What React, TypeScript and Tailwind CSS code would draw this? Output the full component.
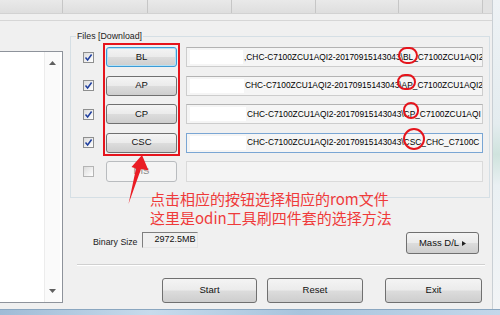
import React from 'react';

const ui = "font-['Liberation_Sans',Arial,sans-serif]";

const CheckBox = ({ checked }: { checked: boolean }) => (
  <div
    className={`w-[11px] h-[11px] border ${checked ? 'border-[#8e8f8f]' : 'border-[#b4b4b4]'} bg-[linear-gradient(135deg,#dcdcdc,#ffffff)] flex items-center justify-center`}
  >
    {checked && (
      <svg width="9" height="9" viewBox="0 0 9 9">
        <path d="M1.5 4.5 L3.6 7 L7.6 1.5" fill="none" stroke="#1f3f9e" strokeWidth="1.5" />
      </svg>
    )}
  </div>
);

const WinButton = ({
  label,
  focused,
  disabled,
  className,
}: {
  label: React.ReactNode;
  focused?: boolean;
  disabled?: boolean;
  className: string;
}) => {
  let look =
    'border-[#707070] bg-[linear-gradient(180deg,#f4f4f4_0%,#ebebeb_48%,#dcdcdc_52%,#cecece_100%)] text-[#111]';
  if (focused)
    look =
      'border-[#3c9bd6] shadow-[inset_0_0_0_1px_#b3e1f6] bg-[linear-gradient(180deg,#f4f4f4_0%,#ebebeb_48%,#dcdcdc_52%,#cecece_100%)] text-[#111]';
  if (disabled) look = 'border-[#b9bcbf] bg-[#f4f4f4] text-[#8a8a8a]';
  return (
    <div className={`flex items-center justify-center rounded-[3px] border text-[9.5px] ${look} ${className}`}>
      {label}
    </div>
  );
};

const rows = [
  { name: 'BL', text: ',CHC-C7100ZCU1AQI2-20170915143043\\BL_C7100ZCU1AQI2', patch: 53, focused: true },
  { name: 'AP', text: 'CHC-C7100ZCU1AQI2-20170915143043\\AP_C7100ZCU1AQI2', patch: 54 },
  { name: 'CP', text: 'CHC-C7100ZCU1AQI2-20170915143043\\CP_C7100ZCU1AQI', patch: 56 },
  { name: 'CSC', text: 'CHC-C7100ZCU1AQI2-20170915143043\\CSC_CHC_C7100C', patch: 56, blue: true },
];

const FileRow = ({ r }: { r: (typeof rows)[number] }) => (
  <div className="flex items-center h-[20px]">
    <CheckBox checked />
    <WinButton label={r.name} focused={r.focused} className="ml-[12px] w-[71px] h-[20px]" />
    <div
      className={`ml-[9px] w-[297px] h-[20px] border ${r.blue ? 'border-[#7aa6d4]' : 'border-[#cdcdcd] border-t-[#b3b3b3]'} bg-[#f5f5f5] flex items-center overflow-hidden whitespace-nowrap`}
    >
      <span className="ml-[3px] h-[14px] bg-white shrink-0" style={{ width: r.patch }} />
      <span className="ml-[1px] text-[9.5px] text-black origin-left scale-x-[0.88]">{r.text}</span>
    </div>
  </div>
);

export default function App() {
  return (
    <div className={`relative w-[500px] h-[315px] overflow-hidden bg-[#f0f0f0] flex flex-col ${ui}`}>
      <div className="flex flex-1 min-h-0">
        {/* window */}
        <div className="w-[492px] flex flex-col">
          {/* tab strip */}
          <div className="h-[14px] flex bg-[#e2e2e2] border-b border-[#d2d2d2]">
            {[63, 85, 84, 84, 83, 84].map((w, i) => (
              <div key={i} style={{ width: w }} className="h-full border-r border-[#c6c6c6] bg-[linear-gradient(180deg,#e9e9e9,#dedede)]" />
            ))}
          </div>
          <div className="h-[6px]" />
          <div className="h-[1px] bg-[#d6d6d6]" />

          <div className="flex flex-1 min-h-0">
            {/* left log list */}
            <div className="w-[63px] pt-[30px]">
              <div className="h-[252px] bg-white border border-l-0 border-[#8e939b] flex justify-end">
                <div className="w-[16px] mr-[2px] border-l border-[#ececec] bg-[#fafafa] flex flex-col items-center justify-between py-[9px]">
                  <svg width="7" height="4" viewBox="0 0 7 4">
                    <path d="M0 4 L3.5 0 L7 4 Z" fill="#5f5f5f" />
                  </svg>
                  <svg width="7" height="4" viewBox="0 0 7 4">
                    <path d="M0 0 L3.5 4 L7 0 Z" fill="#5f5f5f" />
                  </svg>
                </div>
              </div>
            </div>

            {/* right column */}
            <div className="ml-[7px] flex-1 flex flex-col">
              <div className="relative mt-[15px] w-[420px] h-[162px] border border-[#d5dfe5] pt-[10px] pl-[12px]">
                <span className="absolute -top-[6px] left-[5px] px-[1px] bg-[#f0f0f0] text-[8.8px] leading-[10px] text-[#222]">
                  Files [Download]
                </span>
                <div className="flex flex-col gap-[8.5px]">
                  {rows.map((r) => (
                    <FileRow key={r.name} r={r} />
                  ))}
                  <div className="flex items-center h-[20px]">
                    <CheckBox checked={false} />
                    <WinButton label="DIS" disabled className="ml-[12px] w-[71px] h-[21px]" />
                    <div className="ml-[9px] w-[297px] h-[21px] border border-[#dadada] bg-[#f4f4f4]" />
                  </div>
                </div>
              </div>

              <div className="mt-[34px] h-[22px] flex items-start">
                <span className="ml-[23px] mt-[5px] text-[8.8px] leading-[10px] text-[#222]">Binary Size</span>
                <div className="ml-[4px] w-[56px] h-[16px] border border-[#7f7f7f] border-r-[#e6e6e6] border-b-[#e6e6e6] bg-[#f0f0f0] flex items-center justify-end pr-[1px] text-[9px] text-[#111]">
                  2972.5MB
                </div>
                <WinButton
                  label={
                    <span className="flex items-center gap-[3px]">
                      Mass D/L
                      <svg width="4" height="5" viewBox="0 0 4 5">
                        <path d="M0 0 L4 2.5 L0 5 Z" fill="#222" />
                      </svg>
                    </span>
                  }
                  className="ml-auto mr-[13px] w-[73px] h-[22px] text-[8.8px]"
                />
              </div>

              <div className="mt-[10px] ml-[7px] mr-[7px] h-[2px] border-t border-[#d0d0d0] border-b border-b-white" />

              <div className="mt-[12px] flex">
                <WinButton label="Start" className="ml-[92px] w-[95px] h-[25px]" />
                <WinButton label="Reset" className="ml-[10px] w-[96px] h-[25px]" />
                <WinButton label="Exit" className="ml-[22px] w-[97px] h-[25px]" />
              </div>
            </div>
          </div>
        </div>
        {/* right window frame / desktop */}
        <div className="flex-1 border-l border-[#c9cfd4] bg-[linear-gradient(180deg,#eef2f5_0%,#e4ecef_40%,#cfe3dd_50%,#eaf0f3_60%,#f2f4f6_100%)]" />
      </div>
      {/* bottom frame */}
      <div className="h-[6px] bg-[linear-gradient(90deg,#9fbbd6,#c7dbec_30%,#a8c4dd_60%,#c3d7ea)] border-t border-[#8aa6c0]" />

      {/* annotations */}
      <div className="absolute left-[103px] top-[43px] w-[77px] h-[113px] border-2 border-[#e5141c]" />
      {[
        { l: 398, t: 47, w: 20, h: 17 },
        { l: 397, t: 74, w: 19, h: 16 },
        { l: 403, t: 102, w: 16, h: 17 },
        { l: 403, t: 128, w: 22, h: 22 },
      ].map((c, i) => (
        <div
          key={i}
          className="absolute rounded-full border-2 border-[#e5141c]"
          style={{ left: c.l, top: c.t, width: c.w, height: c.h }}
        />
      ))}
      <svg className="absolute left-0 top-0" width="500" height="315" viewBox="0 0 500 315">
        <polygon
          points="142,155 148.5,170.5 141,169 128.5,204 136,168.5 131.5,167"
          fill="#ea1c24"
        />
      </svg>
      <div className="absolute left-[150px] top-[189px] font-['Noto_Sans_CJK_SC',sans-serif] text-[15px] leading-[19px] text-[#ef3a3a] whitespace-nowrap">
        <div>点击相应的按钮选择相应的rom文件</div>
        <div>这里是odin工具刷四件套的选择方法</div>
      </div>
    </div>
  );
}
